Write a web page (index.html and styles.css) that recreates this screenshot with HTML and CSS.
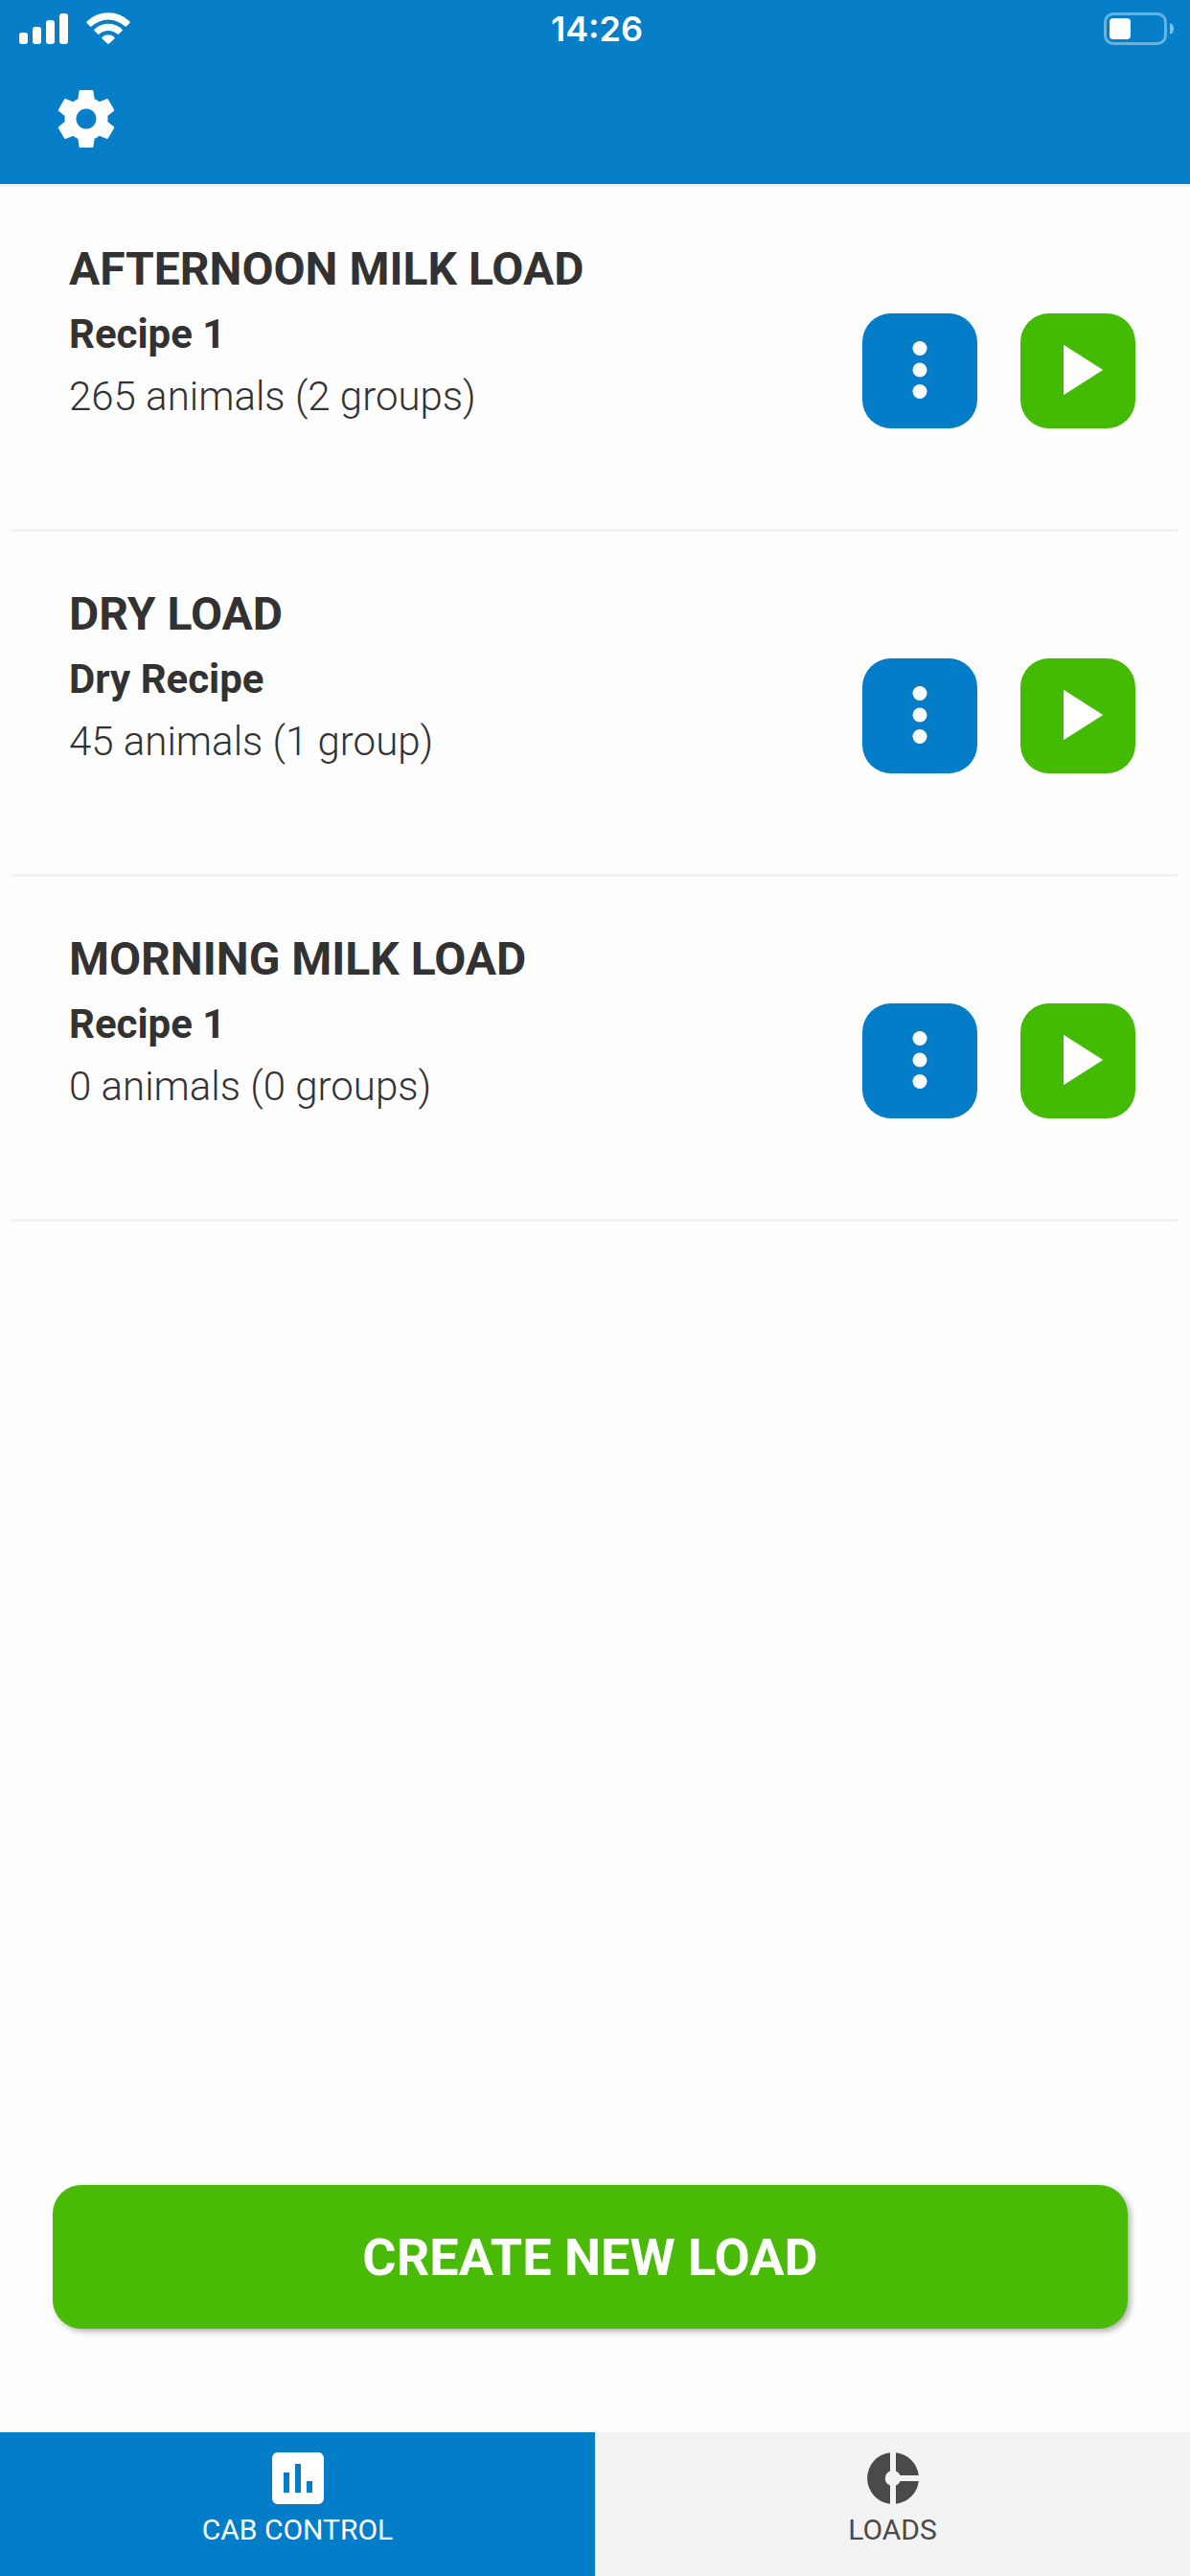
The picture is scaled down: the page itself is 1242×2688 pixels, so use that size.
FILE: index.html
```html
<!DOCTYPE html>
<html lang="en">
<head>
<meta charset="utf-8">
<meta name="viewport" content="width=device-width, initial-scale=1">
<title>Cab Control</title>
<link rel="stylesheet" href="styles.css">
</head>
<body>
<div class="app">
  <header class="header">
    <div class="status">
      <div class="status-left">
        <svg class="signal" viewBox="0 0 51 32" aria-hidden="true"><rect y="20" width="9" height="12" rx="3"/><rect x="14" y="14" width="9" height="18" rx="3"/><rect x="28" y="7" width="9" height="25" rx="3"/><rect x="42" width="9" height="32" rx="3"/></svg>
        <svg class="wifi" viewBox="0 0 46 34" aria-hidden="true"><path d="M.8 9.2a32 32 0 0 1 44.4 0q1 1 0 2l-3.400 3.400q-.7.6-1.400 0a25 25 0 0 0-34.800 0q-.7.6-1.400 0L.8 11.200q-1-1 0-2z"/><path d="M8.600 17.400a21 21 0 0 1 28.800 0q.9.9 0 1.800l-3.500 3.400q-.8.7-1.600 0a14 14 0 0 0-18.600 0q-.8.7-1.600 0l-3.500-3.400q-.9-.9 0-1.800z"/><path d="M16.800 25.600a9.500 9.500 0 0 1 12.400 0q.9.900 0 1.800l-5.300 5.100q-.9.800-1.800 0l-5.300-5.100q-.9-.9 0-1.800z"/></svg>
      </div>
      <time class="clock">14:26</time>
      <svg class="battery" viewBox="0 0 74 34" aria-hidden="true"><rect class="battery-shell" x="1.500" y="1.500" width="63" height="31" rx="8.500"/><path class="battery-tip" d="M69 11a6.500 6.500 0 0 1 0 12z"/><rect x="6" y="6" width="22" height="22" rx="4"/></svg>
    </div>
    <button class="settings" type="button" aria-label="Settings">
      <svg viewBox="0 0 24 24" aria-hidden="true"><path d="M19.430 12.980c.04-.32.070-.64.070-.98s-.03-.66-.07-.98l2.110-1.650c.19-.15.240-.42.120-.64l-2-3.460c-.12-.22-.39-.3-.61-.22l-2.490 1c-.52-.4-1.080-.73-1.690-.98l-.38-2.650C14.460 2.180 14.250 2 14 2h-4c-.25 0-.46.180-.49.420l-.38 2.650c-.61.250-1.170.590-1.690.980l-2.490-1c-.23-.09-.49 0-.61.220l-2 3.460c-.13.220-.07.490.120.640l2.110 1.650c-.04.320-.07.650-.07.980s.03.660.070.980l-2.110 1.650c-.19.150-.24.420-.12.640l2 3.460c.12.220.39.300.61.220l2.490-1c.52.400 1.080.730 1.690.980l.38 2.650c.03.240.240.420.490.420h4c.25 0 .46-.18.490-.42l.38-2.650c.61-.25 1.170-.59 1.690-.98l2.490 1c.23.090.490 0 .61-.22l2-3.460c.12-.22.070-.49-.12-.64l-2.110-1.650zM12 15.500c-1.930 0-3.500-1.570-3.500-3.500s1.570-3.500 3.500-3.500 3.500 1.570 3.500 3.500-1.570 3.500-3.500 3.500z"/></svg>
    </button>
  </header>

  <main class="main">
    <ul class="loads">
      <li class="load">
        <div class="load-text">
          <h2 class="load-name">AFTERNOON MILK LOAD</h2>
          <p class="load-recipe">Recipe 1</p>
          <p class="load-animals">265 animals (2 groups)</p>
        </div>
        <div class="load-actions">
          <button class="icon-button more" type="button" aria-label="More options"><svg viewBox="0 0 24 24" aria-hidden="true"><circle cx="12" cy="6" r="2"/><circle cx="12" cy="12" r="2"/><circle cx="12" cy="18" r="2"/></svg></button>
          <button class="icon-button play" type="button" aria-label="Start load"><svg viewBox="0 0 24 24" aria-hidden="true"><path d="M8 5v14l11-7z"/></svg></button>
        </div>
      </li>
      <li class="load">
        <div class="load-text">
          <h2 class="load-name">DRY LOAD</h2>
          <p class="load-recipe">Dry Recipe</p>
          <p class="load-animals">45 animals (1 group)</p>
        </div>
        <div class="load-actions">
          <button class="icon-button more" type="button" aria-label="More options"><svg viewBox="0 0 24 24" aria-hidden="true"><circle cx="12" cy="6" r="2"/><circle cx="12" cy="12" r="2"/><circle cx="12" cy="18" r="2"/></svg></button>
          <button class="icon-button play" type="button" aria-label="Start load"><svg viewBox="0 0 24 24" aria-hidden="true"><path d="M8 5v14l11-7z"/></svg></button>
        </div>
      </li>
      <li class="load">
        <div class="load-text">
          <h2 class="load-name">MORNING MILK LOAD</h2>
          <p class="load-recipe">Recipe 1</p>
          <p class="load-animals">0 animals (0 groups)</p>
        </div>
        <div class="load-actions">
          <button class="icon-button more" type="button" aria-label="More options"><svg viewBox="0 0 24 24" aria-hidden="true"><circle cx="12" cy="6" r="2"/><circle cx="12" cy="12" r="2"/><circle cx="12" cy="18" r="2"/></svg></button>
          <button class="icon-button play" type="button" aria-label="Start load"><svg viewBox="0 0 24 24" aria-hidden="true"><path d="M8 5v14l11-7z"/></svg></button>
        </div>
      </li>
    </ul>
    <button class="create" type="button">CREATE NEW LOAD</button>
  </main>

  <nav class="tabs">
    <a class="tab tab-active" href="#cab-control" aria-current="page">
      <svg viewBox="0 0 24 24" aria-hidden="true"><path d="M19 3H5c-1.100 0-2 .9-2 2v14c0 1.100.9 2 2 2h14c1.100 0 2-.9 2-2V5c0-1.100-.9-2-2-2zM9 17H7v-7h2v7zm4 0h-2V7h2v10zm4 0h-2v-4h2v4z"/></svg>
      <span>CAB CONTROL</span>
    </a>
    <a class="tab" href="#loads">
      <svg viewBox="0 0 24 24" aria-hidden="true"><path d="M11 3.060A9 9 0 0 0 11 20.940V14.510A2.700 2.700 0 0 1 11 9.490z"/><path d="M13 3.060V9.490A2.700 2.700 0 0 1 14.510 11H20.940A9 9 0 0 0 13 3.060z"/><path d="M13 20.940V14.510A2.700 2.700 0 0 0 14.510 13H20.940A9 9 0 0 1 13 20.940z"/></svg>
      <span>LOADS</span>
    </a>
  </nav>
</div>
</body>
</html>
```
FILE: styles.css
```css
* {
  box-sizing: border-box;
}

body {
  margin: 0;
  background: #fefefe;
  color: #323232;
  font-family: Roboto, "Liberation Sans", sans-serif;
}

h2,
p,
ul {
  margin: 0;
  padding: 0;
}

button {
  border: 0;
  padding: 0;
  color: inherit;
  font: inherit;
  cursor: pointer;
}

svg {
  display: block;
  fill: currentColor;
}

.app {
  display: flex;
  flex-direction: column;
  min-height: 100vh;
}

/* Header and status bar */
.header {
  background: #067fc8;
  border-bottom: 3px solid #eef2f8;
  color: #fff;
}

.status {
  display: grid;
  grid-template-columns: 1fr auto 1fr;
  align-items: center;
  height: 60px;
  padding: 0 16px 0 20px;
}

.status-left {
  display: flex;
  align-items: center;
  gap: 19px;
}

.signal {
  width: 51px;
  height: 32px;
}

.wifi {
  width: 46px;
  height: 34px;
}

.clock {
  font-family: Inter, "Liberation Sans", sans-serif;
  font-size: 36px;
  font-weight: 600;
  line-height: 60px;
}

.battery {
  justify-self: end;
  width: 74px;
  height: 34px;
}

.battery-shell {
  fill: none;
  stroke: #fff;
  stroke-opacity: 0.4;
  stroke-width: 3;
}

.battery-tip {
  fill-opacity: 0.5;
}

.settings {
  display: block;
  width: 72px;
  height: 72px;
  margin: 28px 54px 32px;
  background: none;
}

/* Load list */
.main {
  display: flex;
  flex: 1;
  flex-direction: column;
}

.loads {
  flex: 1;
  padding: 0 12px;
  list-style: none;
}

.load {
  display: flex;
  justify-content: space-between;
  min-height: 360px;
  padding: 51px 45px 0 60px;
  border-bottom: 3px solid #f3f3f3;
}

.load-name {
  font-size: 48px;
  font-weight: 700;
  line-height: 70px;
}

.load-recipe,
.load-animals {
  font-size: 42px;
  line-height: 65px;
}

.load-recipe {
  font-weight: 700;
}

.load-animals {
  font-weight: 300;
}

.load-actions {
  display: flex;
  gap: 45px;
  padding-top: 81px;
}

.icon-button {
  width: 120px;
  height: 120px;
  padding: 0 15px 3px;
  border-radius: 30px;
  color: #fff;
}

.more {
  background: #037dc8;
}

.play {
  background: #43bb03;
}

.create {
  height: 150px;
  margin: 0 65px 108px 55px;
  border-radius: 30px;
  background: #49ba06;
  box-shadow: 3px 3px 6px rgba(0, 0, 0, 0.3);
  color: #fff;
  font-size: 54px;
  font-weight: 700;
}

/* Bottom tabs */
.tabs {
  display: grid;
  grid-template-columns: 1fr 1fr;
}

.tab {
  display: flex;
  flex-direction: column;
  align-items: center;
  height: 150px;
  padding-top: 12px;
  background: #f3f3f3;
  color: #4a4a4a;
  font-size: 30px;
  line-height: 36px;
  text-decoration: none;
}

.tab svg {
  width: 72px;
  height: 72px;
}

.tab-active {
  background: #037dc8;
  color: #fff;
}
```
